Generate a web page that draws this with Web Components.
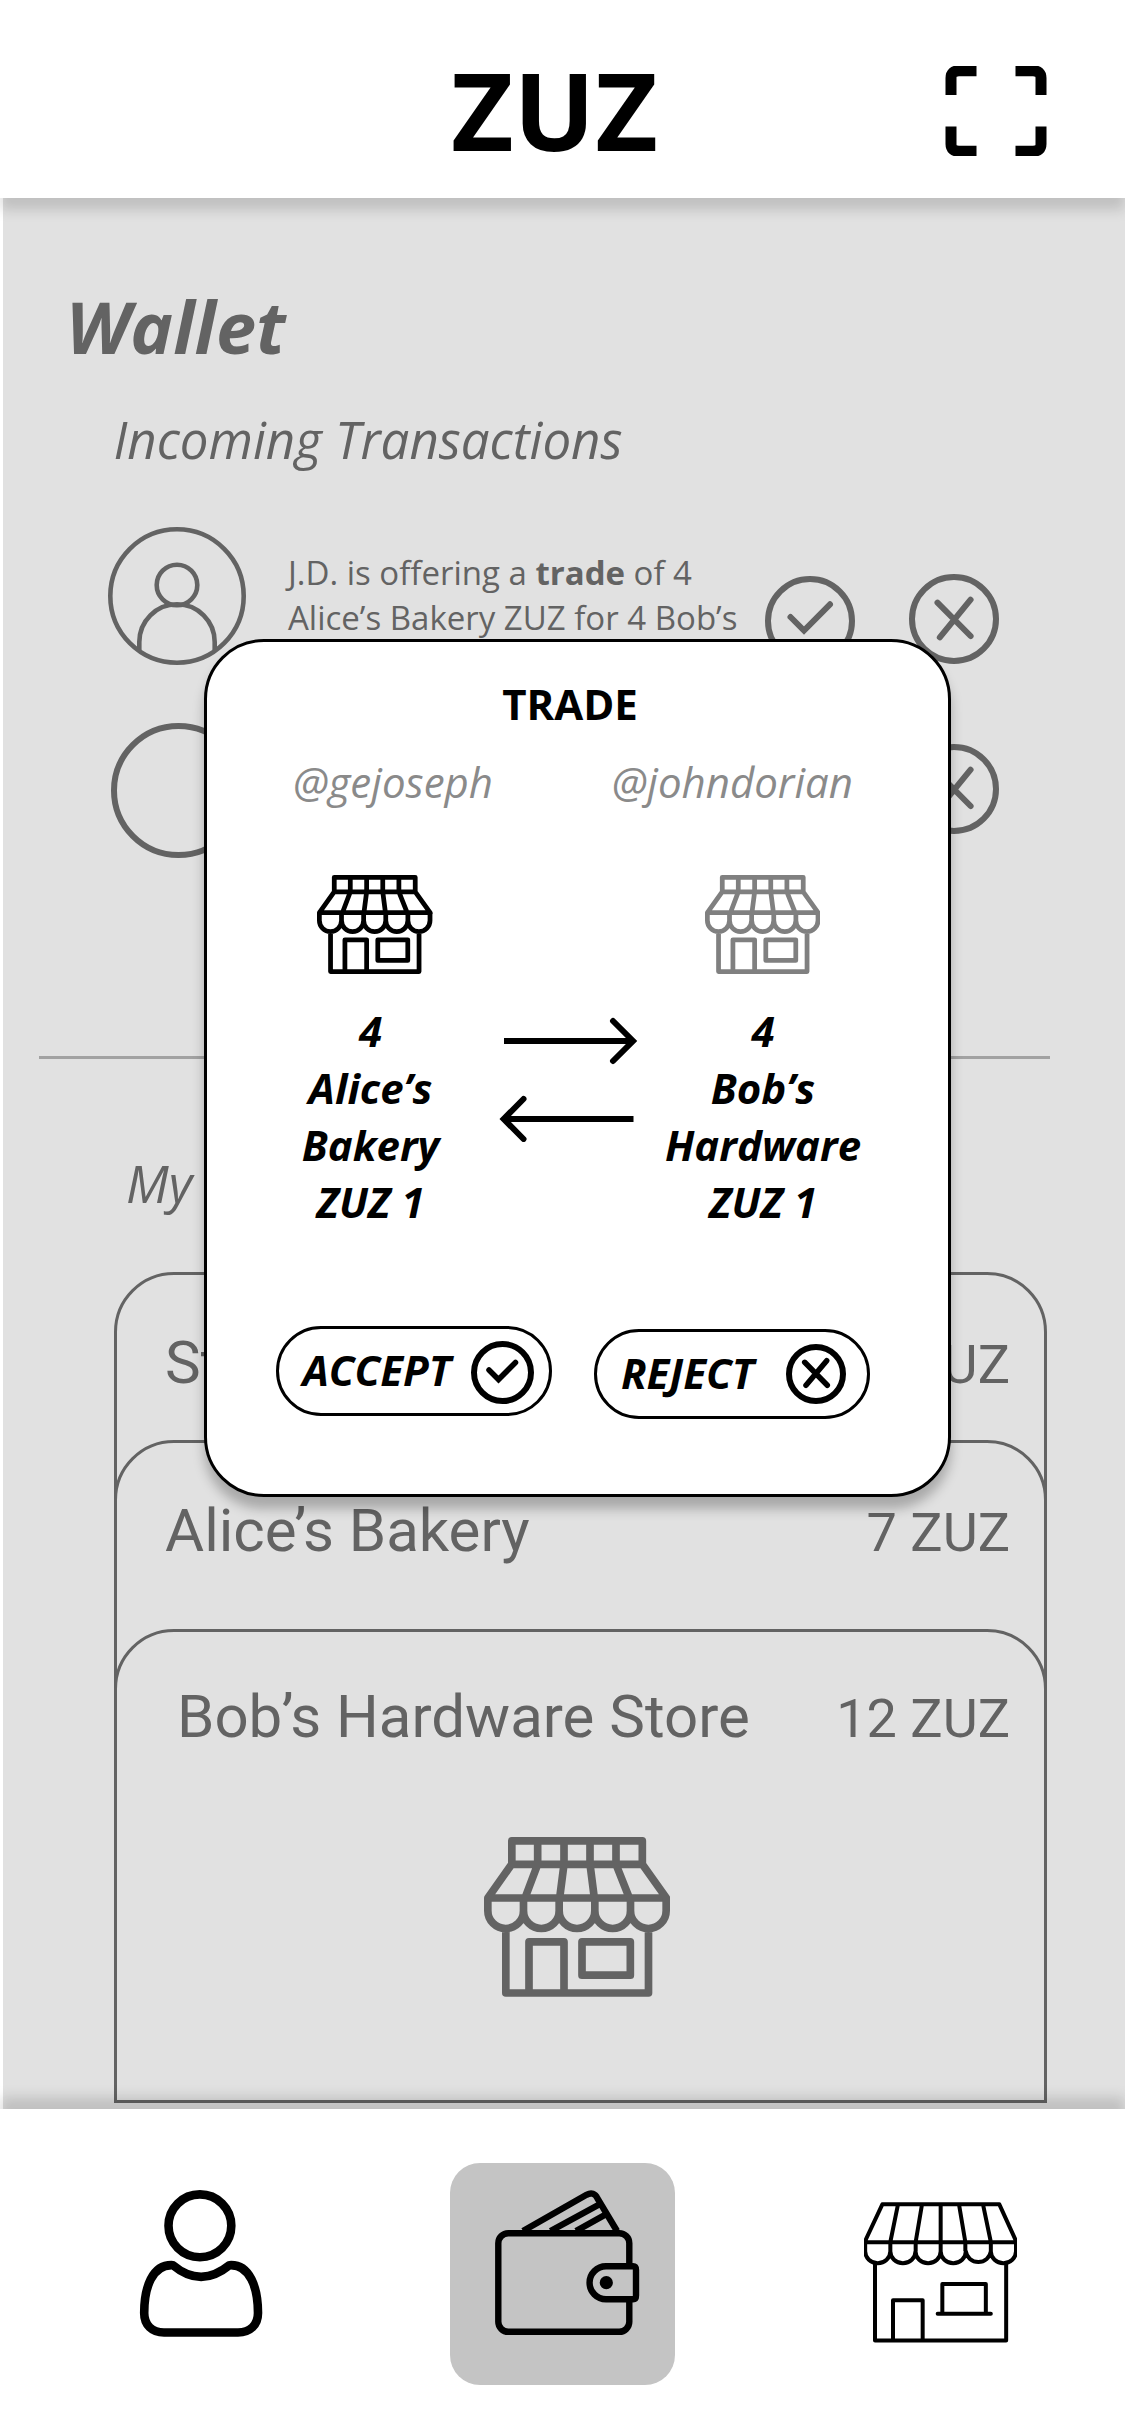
<!DOCTYPE html>
<html lang="en">
<head>
<meta charset="utf-8">
<title>ZUZ Wallet</title>
<style>
body{margin:0;background:#fff;width:1125px;height:2436px;overflow:hidden;font-family:"Open Sans","Noto Sans",sans-serif}
</style>
</head>
<body>
<zuz-app></zuz-app>
<script>
const ICONS = {
  scan: ['0 0 102 90', `<path d="M6 29V12Q6 4.750 14 4.750H31.500M70.500 4.750H88Q96 4.750 96 12V29M96 60.500V78Q96 85.250 88 85.250H70.500M31.500 85.250H14Q6 85.250 6 78V60.500" stroke-width="11"/>`],
  avatar: ['0 0 138 138', `<g stroke-width="4.600"><circle cx="69" cy="69" r="66.700"/><circle cx="69" cy="58" r="20.300"/><path d="M31.300 123V115A37.700 37.700 0 0 1 106.700 115V123"/></g>`],
  check: ['0 0 90 90', `<g stroke-width="6"><circle cx="45" cy="45" r="42"/><path d="M25.500 41L39 54.500L65 28.300" stroke-linecap="round"/></g>`],
  cross: ['0 0 90 90', `<g stroke-width="6"><circle cx="45" cy="45" r="42"/><path d="M28.500 28.700L61.600 62M61.600 25.700L30.800 63.300" stroke-linecap="round"/></g>`],
  accept: ['0 0 63 63', `<circle cx="31.500" cy="31.500" r="28.500" stroke-width="6"/><path d="M18 29L27.500 38.500L44.500 21.500" stroke-width="5.500" stroke-linecap="round"/>`],
  reject: ['0 0 60 60', `<circle cx="30" cy="30" r="27" stroke-width="6"/><path d="M18.700 18.300L41.300 41.300M40.700 16.700L20 41.300" stroke-width="5.500" stroke-linecap="round"/>`],
  store: ['132 111 558 480', `<g stroke-width="23" stroke-linejoin="round"><path d="M215.500 193V122.500H607V193M293 123V193M372 123V193M450 123V193M528 123V193M215 193H607L679 294H143.500ZM293 193L255 294M372 193L359 294M450 193L463 294M528 193L568 294"/><path d="M143.500 294V332A53.500 53.500 0 0 0 250.500 332A53.500 53.500 0 0 0 357.500 332A53.500 53.500 0 0 0 464.500 332A53.500 53.500 0 0 0 571.500 332A53.500 53.500 0 0 0 678.500 332V294M250.500 294V332M357.500 294V332M464.500 294V332M571.500 294V332M197.500 386V579H625.500V386M267 579V425.500H372V579M426 425.500H571V525.500H426Z"/></g>`],
  exchange: ['0 0 142 128', `<g stroke-width="6"><path d="M6 27H135M135.500 105H7"/><path d="M115 7L135 27L115 47M25.500 85L5.700 105L25.500 125" stroke-linecap="round"/></g>`],
  person: ['0 0 124 148', `<g stroke-width="8.600"><circle cx="60.900" cy="35.800" r="31.400"/><path d="M34 75.200C13 74 5.200 98 5.200 123C5.200 135 13 142.500 25 142.500H99C111 142.500 119 135 119 123C119 98 111 74 90.500 75.200Q62 98.500 34 75.200Z" stroke-linejoin="round"/></g>`],
  wallet: ['0 0 145 146', `<g stroke-width="6.400"><path d="M28 41L91.500 4.800Q99 1 102.500 8.500L122 41M55.500 41L106 13.500M81 41L111.500 24"/><rect x="3.300" y="43.200" width="131" height="98.600" rx="10"/><path d="M111 76.300H138Q141 76.300 141 80V105.500Q141 109.200 138 109.200H111A16.450 16.450 0 0 1 111 76.300Z" fill="#c4c4c4"/><circle cx="111.300" cy="92.700" r="6.600" fill="currentColor" stroke="none"/></g>`],
  market: ['132 336 459 424', `<g stroke-width="12" stroke-linejoin="round"><path d="M187 343H538L588 453V484A37.750 36 0 0 1 512.500 484A37.750 36 0 0 1 437.500 484A37.750 36 0 0 1 362 484A37.750 36 0 0 1 286.500 484A37.750 36 0 0 1 211 484A37.750 36 0 0 1 135.500 484V453ZM137 456.500H588M234 343L211 456V484M306 343L287 456V484M362 343V484M417 343L436 456V484M489 343L512.500 456V484"/><path d="M165 520V751.500H558.500V520M219 751V631H308V751M367 671V582H497.500V671M353 671H512.500" stroke-linecap="round"/></g>`]
};

function define(name, html, setup) {
  customElements.define(name, class extends HTMLElement {
    constructor() {
      super();
      this.attachShadow({ mode: 'open' }).innerHTML = html;
    }
    connectedCallback() { if (setup) setup(this, this.shadowRoot); }
  });
}

define('zuz-icon', `<style>
  :host{display:block;flex:none}
  svg{display:block;width:100%;height:100%;fill:none;stroke:currentColor}
</style><svg preserveAspectRatio="none" aria-hidden="true"></svg>`, (el, root) => {
  const [box, art] = ICONS[el.getAttribute('name')];
  const svg = root.querySelector('svg');
  svg.setAttribute('viewBox', box);
  svg.innerHTML = art;
  el.style.width = el.getAttribute('w') + 'px';
  el.style.height = el.getAttribute('h') + 'px';
});

define('zuz-header', `<style>
  :host{display:flex;flex:none;box-sizing:border-box;height:198px;padding:56px 78px 0 451px;background:#fff;box-shadow:0 12px 12px rgba(0,0,0,.145);position:relative;z-index:1;color:#000}
  h1{margin:0;font-size:108px;line-height:108px;font-weight:700}
  zuz-icon{margin:10px 0 0 auto}
</style><h1><slot></slot></h1><zuz-icon name="scan" w="102" h="90"></zuz-icon>`);

define('zuz-request', `<style>
  :host{display:flex;align-items:flex-start;box-sizing:border-box}
  p{margin:24px 0 0;width:477px;font-size:33px;line-height:45px;white-space:nowrap}
</style><slot name="avatar"></slot><p><slot></slot></p><slot name="actions"></slot>`);

define('zuz-card', `<style>
  :host{display:block;box-sizing:border-box;width:933px;height:var(--h,260px);border:3px solid #636363;border-radius:60px 60px 0 0;background:#e1e1e1;font-family:Roboto,sans-serif}
  header{display:flex;justify-content:space-between;align-items:baseline;padding:var(--pad,58px 34px 0 48px)}
  .n{font-size:60px;line-height:60px}
  .a{font-size:54px;line-height:54px}
  .body{display:flex;justify-content:center;padding:90px 7px 0 0}
</style><header><span class="n"><slot></slot></span><span class="a"><slot name="amount"></slot></span></header><div class="body"><slot name="art"></slot></div>`);

define('zuz-pill', `<style>
  :host{display:flex;box-sizing:border-box;width:276px;height:90px;border:3px solid #000;border-radius:45px;justify-content:space-between;font-size:42px;line-height:42px;font-weight:700;font-style:italic}
  span{margin-top:20px}
</style><span><slot></slot></span><slot name="icon"></slot>`);

define('zuz-trade', `<style>
  :host{display:block;box-sizing:border-box;width:747px;height:858px;border:3px solid #000;border-radius:60px;background:#fff;box-shadow:0 12px 12px rgba(0,0,0,.25);color:#000;font-size:42px}
  h2{margin:41px 0 0;padding-right:15px;font-size:42px;line-height:42px;text-align:center}
  .users{display:flex;justify-content:space-between;margin-top:36px;padding:0 95px 0 86px;line-height:42px;font-style:italic;color:#8a8a8a}
  .stores{display:flex;justify-content:space-between;margin-top:72px;padding:0 128px 0 110.300px}
  .swap{display:flex;margin-top:28px;font-weight:700;font-style:italic;line-height:57px;text-align:center}
  .l{width:150px;margin-left:88.500px}.r{width:220px;margin-left:13px}
  .swap zuz-icon{margin:12px 0 0 52.500px}
  .acts{display:flex;gap:42px;margin:96px 0 0 69px}
  .rej{margin-top:3px}
  .acts zuz-icon{margin-top:12px}
</style>
<h2>TRADE</h2>
<div class="users"><span>@gejoseph</span><span>@johndorian</span></div>
<div class="stores"><zuz-icon name="store" w="115.400" h="99"></zuz-icon><zuz-icon name="store" w="115.400" h="99" style="color:#808080"></zuz-icon></div>
<div class="swap"><div class="l">4<br>Alice’s<br>Bakery<br>ZUZ 1</div><zuz-icon name="exchange" w="142" h="128"></zuz-icon><div class="r">4<br>Bob’s<br>Hardware<br>ZUZ 1</div></div>
<div class="acts"><zuz-pill style="padding:0 15px 0 23.500px">ACCEPT<zuz-icon slot="icon" name="accept" w="63" h="63"></zuz-icon></zuz-pill><zuz-pill class="rej" style="padding:0 21px 0 24px">REJECT<zuz-icon slot="icon" name="reject" w="60" h="60"></zuz-icon></zuz-pill></div>`);

define('zuz-nav', `<style>
  :host{display:flex;flex:none;box-sizing:border-box;height:327px;background:#fff;box-shadow:0 -12px 12px rgba(0,0,0,.145);position:relative;z-index:1;color:#000;align-items:flex-start}
  .p{margin:81px 0 0 139px}
  .tile{box-sizing:border-box;width:225px;height:222px;border-radius:30px;background:#c4c4c4;margin:54px 0 0 187px;padding:27px 0 0 45px}
  .m{margin:93px 0 0 189px}
</style><zuz-icon class="p" name="person" w="124" h="148"></zuz-icon><div class="tile"><zuz-icon name="wallet" w="145" h="146"></zuz-icon></div><zuz-icon class="m" name="market" w="153" h="141.300"></zuz-icon>`);

define('zuz-app', `<style>
  :host{display:flex;flex-direction:column;width:1125px;height:2436px;position:relative;overflow:hidden}
  main{height:1911px;margin-left:3px;box-sizing:border-box;padding-top:92px;background:#e1e1e1;color:#636363}
  h1{margin:0 0 0 63px;font-size:72px;line-height:72px;font-style:italic}
  h2{margin:52px 0 0 110.500px;font-size:51px;line-height:51px;font-weight:400;font-style:italic}
  .r1{margin-top:61px;padding-left:105px;height:139px}
  .r1 zuz-icon[name=avatar]{margin:.5px 42px 0 0}
  .r1 zuz-icon[name=check]{margin-top:50px}
  .r1 zuz-icon[name=cross]{margin:48px 0 0 54px}
  .r2{margin-top:58px;padding-left:108px;height:135px}
  .ring{box-sizing:border-box;width:135px;height:135px;border:6px solid #636363;border-radius:50%;margin-right:186px;flex:none}
  .r2 zuz-icon{margin:21px 0 0}
  hr{margin:198px 0 0 36px;width:1011px;height:3px;border:0;background:#a2a2a2}
  h2.my{margin:99px 0 0 123px}
  .stack{margin:63px 0 0 111px}
  zuz-card+zuz-card{margin-top:-92px}
  zuz-card+zuz-card.c3{margin-top:-71px}
  zuz-trade{position:absolute;left:204px;top:639px;z-index:2}
</style>
<zuz-header>ZUZ</zuz-header>
<main>
  <h1>Wallet</h1>
  <h2>Incoming Transactions</h2>
  <zuz-request class="r1"><zuz-icon slot="avatar" name="avatar" w="138" h="138"></zuz-icon>J.D. is offering a <b>trade</b> of 4<br>Alice’s Bakery ZUZ for 4 Bob’s<zuz-icon slot="actions" name="check" w="90" h="90"></zuz-icon><zuz-icon slot="actions" name="cross" w="90" h="90"></zuz-icon></zuz-request>
  <zuz-request class="r2"><div class="ring" slot="avatar"></div><zuz-icon slot="actions" name="cross" w="90" h="90"></zuz-icon></zuz-request>
  <hr>
  <h2 class="my">My</h2>
  <div class="stack">
    <zuz-card>St<span slot="amount">ZUZ</span></zuz-card>
    <zuz-card>Alice’s Bakery<span slot="amount">7 ZUZ</span></zuz-card>
    <zuz-card class="c3" style="--h:474px;--pad:55px 34px 0 60px">Bob’s Hardware Store<span slot="amount">12 ZUZ</span><zuz-icon slot="art" name="store" w="186" h="160"></zuz-icon></zuz-card>
  </div>
</main>
<zuz-nav></zuz-nav>
<zuz-trade></zuz-trade>`);
</script>
</body>
</html>
